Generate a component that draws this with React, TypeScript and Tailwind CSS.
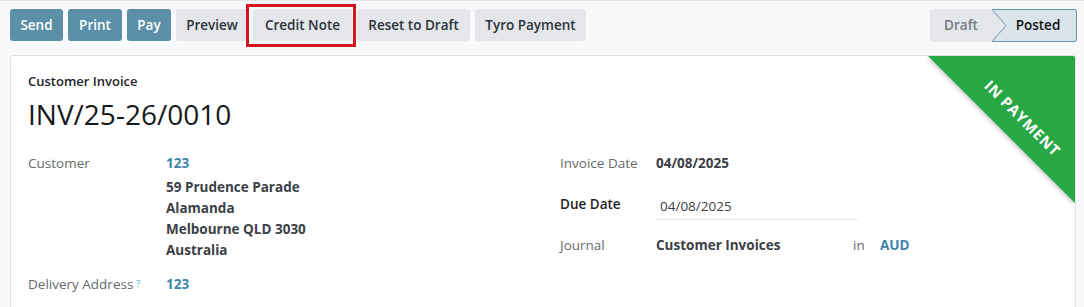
import React from "react";

const font = { fontFamily: '"Open Sans", "Noto Sans", sans-serif' };

function Btn({ label, primary, w }: { label: string; primary?: boolean; w: string }) {
  return (
    <div
      className={`${w} h-[32px] flex items-center justify-center rounded-[3px] text-[13.5px] font-semibold ${
        primary ? "bg-[#5c8fa8] text-white" : "bg-[#e4e6ea] text-[#2d3339]"
      }`}
    >
      {label}
    </div>
  );
}

export default function App() {
  return (
    <div className="w-[1084px] h-[307px] overflow-hidden bg-[#f8f9fa] border-t border-[#e3e5e8]" style={font}>
      {/* control bar */}
      <div className="flex items-start justify-between pl-[10px] pr-[7px] pt-[8px] h-[54px]">
        <div className="flex gap-[5px]">
          <Btn label="Send" primary w="w-[53px]" />
          <Btn label="Print" primary w="w-[54px]" />
          <Btn label="Pay" primary w="w-[44px]" />
          <Btn label="Preview" w="w-[72px]" />
          <div className="relative">
            <Btn label="Credit Note" w="w-[99px]" />
            <div className="absolute left-[-7px] top-[-5px] w-[110px] h-[43px] border-[3px] border-[#d6141c]" />
          </div>
          <Btn label="Reset to Draft" w="w-[113px]" />
          <Btn label="Tyro Payment" w="w-[111px]" />
        </div>
        <div className="flex h-[33px] text-[13.5px] font-semibold">
          <div className="w-[62px] flex items-center justify-center bg-[#e4e6ea] text-[#737a80] rounded-l-[3px]">
            Draft
          </div>
          <div className="relative w-[85px] flex items-center justify-center pl-[8px] bg-[#dae4eb] text-[#111] border border-[#6c97ae] border-l-0 rounded-r-[3px]">
            Posted
            <svg className="absolute left-0 top-[-1px]" width="16" height="33" viewBox="0 0 16 33">
              <polygon points="0,0 14,16.5 0,33" fill="#e4e6ea" />
              <polyline points="0,0.5 14,16.5 0,32.5" fill="none" stroke="#6c97ae" strokeWidth="1" />
            </svg>
          </div>
        </div>
      </div>

      {/* card */}
      <div className="relative ml-[10px] mr-[8px] h-[300px] bg-white border border-[#dfe2e6] rounded-[3px] overflow-hidden px-[17px] pt-[15px]">
        {/* ribbon */}
        <div className="absolute top-0 right-0 w-[147px] h-[147px] drop-shadow-[0_2px_2px_rgba(0,0,0,0.25)]">
          <div className="w-full h-full bg-[#28a745] [clip-path:polygon(0_0,100%_0,100%_100%)]" />
        </div>
        <div className="absolute top-[62px] right-[52px] translate-x-1/2 -translate-y-1/2 rotate-45 text-white text-[15px] font-bold tracking-[0.6px] whitespace-nowrap">
          IN PAYMENT
        </div>

        <div className="text-[13px] leading-[20px] font-semibold text-[#1f2428]">Customer Invoice</div>
        <div className="text-[28px] leading-[36px] font-medium text-[#16191c] mt-[5px]">INV/25-26/0010</div>

        <div className="flex mt-[21px] text-[13.5px]">
          {/* left column */}
          <div className="w-[532px]">
            <div className="flex">
              <div className="w-[138px] leading-[21px] text-[#666b70]">Customer</div>
              <div className="font-bold">
                <div className="leading-[21px] text-[#3e86ab] mb-[3px]">123</div>
                <div className="leading-[21px] text-[#3b4046]">59 Prudence Parade</div>
                <div className="leading-[21px] text-[#3b4046]">Alamanda</div>
                <div className="leading-[21px] text-[#3b4046]">Melbourne QLD 3030</div>
                <div className="leading-[21px] text-[#3b4046]">Australia</div>
              </div>
            </div>
            <div className="flex mt-[13px]">
              <div className="w-[138px] leading-[21px] text-[#666b70]">
                Delivery Address<sup className="text-[#4fa7c8] text-[9px] ml-[3px] relative top-[-2px]">?</sup>
              </div>
              <div className="leading-[21px] font-bold text-[#3e86ab]">123</div>
            </div>
          </div>

          {/* right column */}
          <div className="flex-1">
            <div className="flex h-[41px]">
              <div className="w-[96px] leading-[21px] text-[#666b70]">Invoice Date</div>
              <div className="leading-[21px] font-bold text-[#3b4046]">04/08/2025</div>
            </div>
            <div className="flex h-[41px]">
              <div className="w-[96px] leading-[21px] font-semibold text-[#1f2428]">Due Date</div>
              <div className="w-[202px] h-[26px] leading-[21px] pl-[4px] pt-[2px] border-b border-[#e5e7ea] text-[#3b4046]">
                04/08/2025
              </div>
            </div>
            <div className="flex h-[41px]">
              <div className="w-[96px] leading-[21px] text-[#666b70]">Journal</div>
              <div className="w-[197px] leading-[21px] font-bold text-[#3b4046]">Customer Invoices</div>
              <div className="w-[27px] leading-[21px] text-[#666b70]">in</div>
              <div className="leading-[21px] font-bold text-[#3e86ab]">AUD</div>
            </div>
          </div>
        </div>
      </div>
    </div>
  );
}
